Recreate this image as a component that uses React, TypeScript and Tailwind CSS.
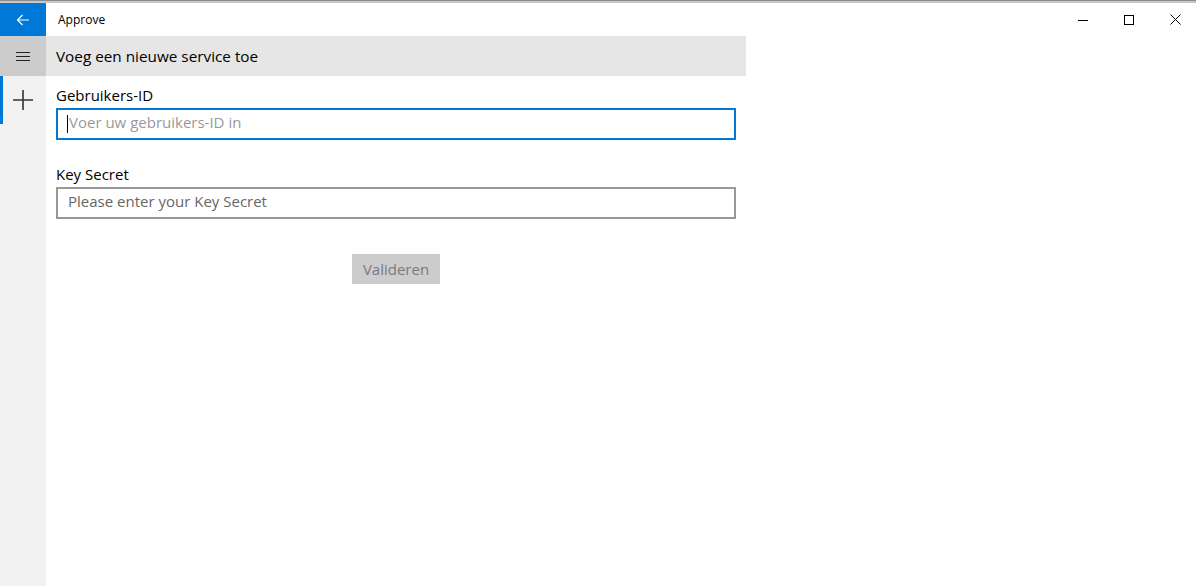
import React from 'react';

const App: React.FC = () => {
  return (
    <div className="w-[1196px] h-[586px] flex flex-col bg-white overflow-hidden" style={{ fontFamily: '"Open Sans", "Noto Sans", sans-serif' }}>
      {/* window top edge */}
      <div className="h-[1px] bg-[#8a8a8a]" />
      <div className="h-[2px] bg-[#c8c8c8]" />

      {/* title bar */}
      <div className="h-[33px] flex items-center">
        <div className="w-[46px] h-full bg-[#0078d7] flex items-center justify-center">
          <svg width="14" height="12" viewBox="0 0 14 12" fill="none" stroke="white" strokeWidth="1.2">
            <path d="M13 6H1.5M6.5 1L1.5 6l5 5" />
          </svg>
        </div>
        <span className="ml-3 text-[12px] text-black">Approve</span>
        <div className="ml-auto mr-[-2px] flex h-full">
          <div className="w-[46px] h-full flex items-center justify-center">
            <svg width="10" height="10" viewBox="0 0 10 10" stroke="black" strokeWidth="1">
              <path d="M0 5.5h10" />
            </svg>
          </div>
          <div className="w-[46px] h-full flex items-center justify-center">
            <svg width="10" height="10" viewBox="0 0 10 10" fill="none" stroke="black" strokeWidth="1">
              <rect x="0.5" y="0.5" width="9" height="9" />
            </svg>
          </div>
          <div className="w-[46px] h-full flex items-center justify-center">
            <svg width="11" height="11" viewBox="0 0 11 11" stroke="black" strokeWidth="1">
              <path d="M0.5 0.5l10 10M10.5 0.5l-10 10" />
            </svg>
          </div>
        </div>
      </div>

      <div className="flex flex-1">
        {/* side nav */}
        <div className="w-[46px] bg-[#f2f2f2] flex flex-col">
          <div className="h-[40px] bg-[#cccccc] flex items-center justify-center">
            <svg width="16" height="12" viewBox="0 0 16 12" stroke="#222" strokeWidth="1">
              <path d="M1 2.5h14M1 6.5h14M1 10.5h14" />
            </svg>
          </div>
          <div className="h-[48px] relative flex items-center justify-center">
            <div className="absolute left-0 top-0 w-[3px] h-full bg-[#0078d7]" />
            <svg width="22" height="22" viewBox="0 0 22 22" stroke="#333" strokeWidth="1.6">
              <path d="M11 1v20M1 11h20" />
            </svg>
          </div>
        </div>

        {/* content */}
        <div className="flex-1 flex flex-col">
          <div className="w-[700px] h-[40px] bg-[#e6e6e6] flex items-center pl-[10px] text-[15.3px] text-black">
            Voeg een nieuwe service toe
          </div>
          <div className="w-[680px] ml-[10px] flex flex-col">
            <label className="mt-[9px] text-[15px] text-black leading-[20px]">Gebruikers-ID</label>
            <div className="mt-[3px] h-[32px] border-2 border-[#0078d7] flex items-center pl-[9px] pb-[4px] text-[15px] text-[#999]">
              <span className="w-[1px] h-[18px] bg-black mr-[1px] mt-[3px]" />
              Voer uw gebruikers-ID in
            </div>
            <label className="mt-[24px] text-[15px] text-black leading-[20px]">Key Secret</label>
            <div className="mt-[3px] h-[32px] border-2 border-[#999] flex items-center pl-[10px] pb-[4px] text-[15px] text-[#666]">
              Please enter your Key Secret
            </div>
            <div className="mt-[35px] flex justify-center">
              <button className="w-[88px] h-[30px] bg-[#cccccc] text-[15px] text-[#7a7a7a]">Valideren</button>
            </div>
          </div>
        </div>
      </div>
    </div>
  );
};

export default App;
